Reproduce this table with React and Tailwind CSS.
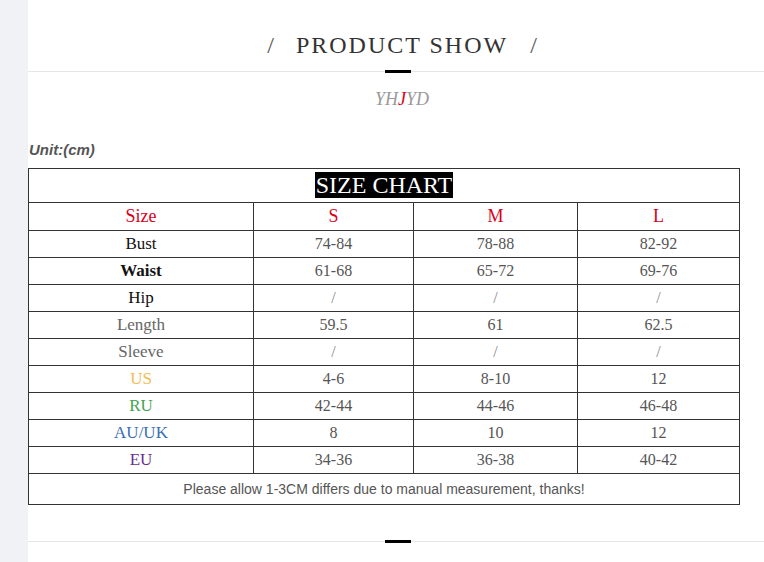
const rows = [
  { label: 'Bust', cls: 'text-[#111]', vals: ['74-84', '78-88', '82-92'] },
  { label: 'Waist', cls: 'text-[#111] font-bold', vals: ['61-68', '65-72', '69-76'] },
  { label: 'Hip', cls: 'text-[#111]', vals: ['/', '/', '/'] },
  { label: 'Length', cls: 'text-[#666]', vals: ['59.5', '61', '62.5'] },
  { label: 'Sleeve', cls: 'text-[#666]', vals: ['/', '/', '/'] },
  { label: 'US', cls: 'text-[#f2bd55]', vals: ['4-6', '8-10', '12'] },
  { label: 'RU', cls: 'text-[#43a34f]', vals: ['42-44', '44-46', '46-48'] },
  { label: 'AU/UK', cls: 'text-[#3a6fb0]', vals: ['8', '10', '12'] },
  { label: 'EU', cls: 'text-[#6a2d8f]', vals: ['34-36', '36-38', '40-42'] },
];

const serif = "font-['Liberation_Serif',serif]";

function Divider() {
  return (
    <div className="relative h-[1px] bg-[#e6e6e6]">
      <div className="absolute left-[357px] top-[-1px] h-[3px] w-[26px] bg-black" />
    </div>
  );
}

export default function App() {
  return (
    <div className="flex min-h-[562px] bg-white font-['Liberation_Serif',serif]">
      <div className="w-[28px] shrink-0 bg-[#f0f2f5]" />
      <div className="flex-1">
        {/* Title */}
        <div className="flex justify-center gap-[22px] pl-[12px] pt-[31px] pb-[12px] text-[24px] leading-[28px] text-[#333]">
          <span className="font-light text-[#555]">/</span>
          <span className="tracking-[2px]">PRODUCT SHOW</span>
          <span className="font-light text-[#555]">/</span>
        </div>
        <Divider />

        <div className="mt-[17px] pl-[12px] text-center text-[18px] italic leading-[20px] text-[#9a9a9a]">
          YH<span className="text-[#d9001b]">J</span>YD
        </div>

        <div className="mt-[31px] mb-[8px] pl-[1px] font-['Liberation_Sans',sans-serif] text-[15px] font-bold italic leading-[20px] text-[#555]">
          Unit:(cm)
        </div>

        {/* Size table */}
        <table className={`w-[712px] border-collapse text-center ${serif}`}>
          <tbody>
            <tr>
              <td colSpan={4} className="h-[34px] border border-[#333] p-0 align-middle">
                <span className="bg-black px-[1px] text-[24px] leading-[27px] text-white">SIZE CHART</span>
              </td>
            </tr>
            <tr className="text-[18px] text-[#d9001b]">
              <td className={`h-[28px] w-[225px] border border-[#333] p-0 ${serif}`}>Size</td>
              <td className={`w-[160px] border border-[#333] p-0 ${serif}`}>S</td>
              <td className={`w-[164px] border border-[#333] p-0 ${serif}`}>M</td>
              <td className={`border border-[#333] p-0 ${serif}`}>L</td>
            </tr>
            {rows.map((r) => (
              <tr key={r.label}>
                <td className={`h-[27px] border border-[#333] p-0 text-[17px] ${serif} ${r.cls}`}>{r.label}</td>
                {r.vals.map((v, i) => (
                  <td
                    key={i}
                    className={`border border-[#333] p-0 text-[16px] ${serif} ${v === '/' ? 'text-[#888]' : 'text-[#555]'}`}
                  >
                    {v}
                  </td>
                ))}
              </tr>
            ))}
            <tr>
              <td
                colSpan={4}
                className="h-[31px] border border-[#333] p-0 font-['Liberation_Sans',sans-serif] text-[14px] text-[#555]"
              >
                Please allow 1-3CM differs due to manual measurement, thanks!
              </td>
            </tr>
          </tbody>
        </table>

        <div className="mt-[36px]">
          <Divider />
        </div>
      </div>
    </div>
  );
}
